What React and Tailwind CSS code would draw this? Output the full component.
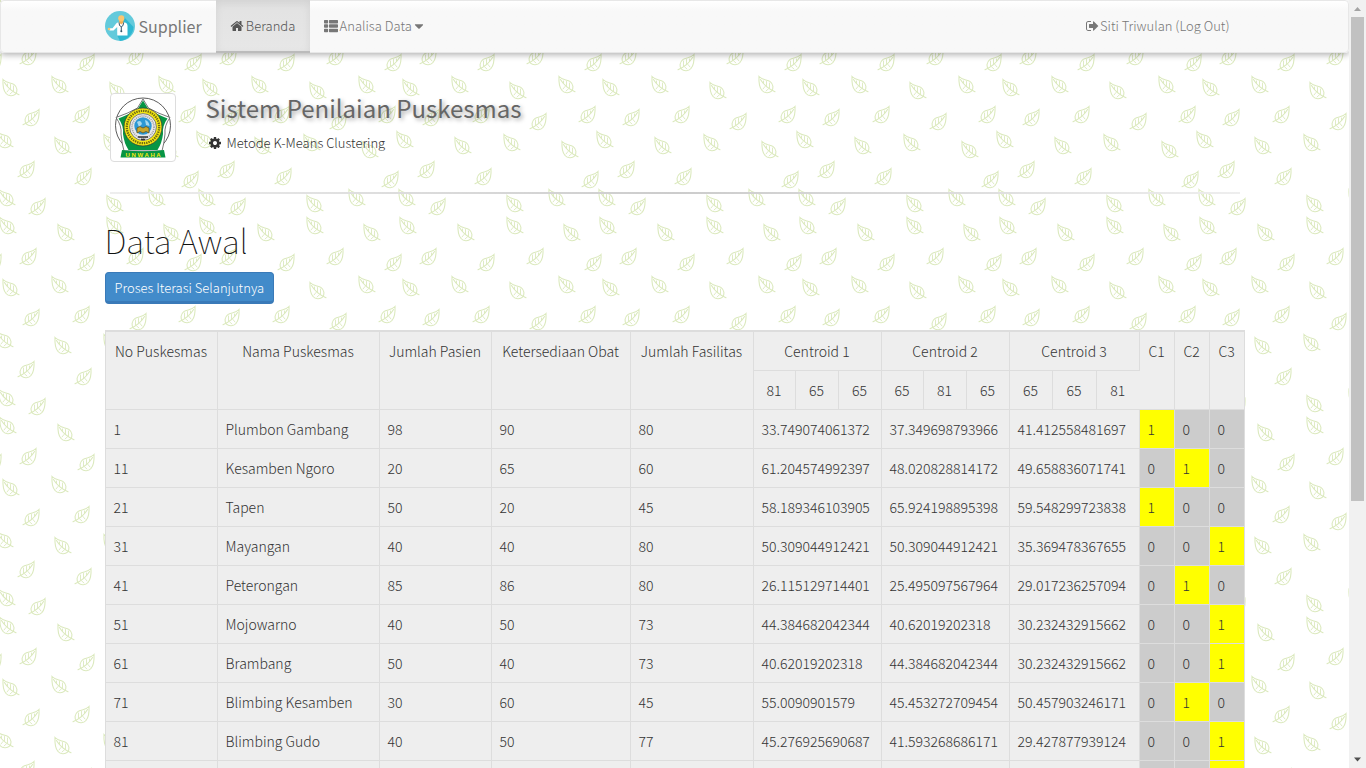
import React from "react";
import { FaCaretDown, FaThList } from "react-icons/fa";

const UP_LEAVES = [
  [193, 63], [28, 57], [86, 63], [135, 57], [187, 115], [31, 118], [81, 115],
  [138, 122], [190, 180], [26, 170], [83, 177], [37, 7],
];

const DOWN_LEAVES = [
  [167, 85], [11, 88], [60, 85], [118, 91], [5, 140], [170, 150], [63, 146],
  [112, 143], [157, 198], [7, 198], [115, 4], [172, 33], [8, 26], [66, 33],
  [115, 26],
];

// Leaves that cross a tile edge are repeated on the opposite side.
const wrap = (leaves) =>
  leaves.flatMap(([x, y]) =>
    [-200, 0, 200].flatMap((dx) =>
      [-200, 0, 200]
        .map((dy) => [x + dx, y + dy])
        .filter(([a, b]) => a > -12 && a < 212 && b > -12 && b < 212)
    )
  );

const ROWS = [
  ["1", "Plumbon Gambang", "98", "90", "80", "33.749074061372", "37.349698793966", "41.412558481697", 0],
  ["11", "Kesamben Ngoro", "20", "65", "60", "61.204574992397", "48.020828814172", "49.658836071741", 1],
  ["21", "Tapen", "50", "20", "45", "58.189346103905", "65.924198895398", "59.548299723838", 0],
  ["31", "Mayangan", "40", "40", "80", "50.309044912421", "50.309044912421", "35.369478367655", 2],
  ["41", "Peterongan", "85", "86", "80", "26.115129714401", "25.495097567964", "29.017236257094", 1],
  ["51", "Mojowarno", "40", "50", "73", "44.384682042344", "40.62019202318", "30.232432915662", 2],
  ["61", "Brambang", "50", "40", "73", "40.62019202318", "44.384682042344", "30.232432915662", 2],
  ["71", "Blimbing Kesamben", "30", "60", "45", "55.0090901579", "45.453272709454", "50.457903246171", 1],
  ["81", "Blimbing Gudo", "40", "50", "77", "45.276925690687", "41.593268686171", "29.427877939124", 2],
  ["", "", "", "", "", "", "", "", 2],
];

function LeafBackground() {
  return (
    <svg className="absolute inset-0 h-full w-full" aria-hidden="true">
      <defs>
        <g id="leaf" fill="none" stroke="#dbe9bd" strokeWidth="1.1" strokeLinecap="round">
          <path d="M-8 -8.5C-8.3 -3 -8 2 -5 5.5C-2.5 8.3 2 8.6 4.5 6.2C6.8 3.5 6.4 -1 3.2 -3.4C0 -5.4 -5 -5 -8 -8.5Z" />
          <path d="M-6.5 -5.5C-4 -1 1 3.5 8 6.8" />
          <path d="M-3.5 -4V-1.5M-0.5 -3.5V1M2.5 -2V3.2M-4 4L-2 1.5M-1 6L1.5 3.8" strokeWidth="0.9" />
        </g>
        <pattern id="leaves" width="200" height="200" patternUnits="userSpaceOnUse">
          {wrap(DOWN_LEAVES).map(([x, y]) => (
            <use key={`d${x}/${y}`} href="#leaf" transform={`translate(${x} ${y})`} />
          ))}
          {wrap(UP_LEAVES).map(([x, y]) => (
            <use key={`u${x}/${y}`} href="#leaf" transform={`translate(${x} ${y}) scale(-1 1)`} />
          ))}
        </pattern>
      </defs>
      <rect width="100%" height="100%" fill="url(#leaves)" />
    </svg>
  );
}

function DoctorLogo() {
  return (
    <svg className="size-[30px]" viewBox="0 0 30 30" aria-hidden="true">
      <circle cx="15" cy="15" r="15" fill="#63cadb" />
      <path d="M18 5L28.5 16A15 15 0 0 1 15 30L12 24Z" fill="#2eb8d2" />
      <path d="M13 11.5H20Q22.5 12 22.5 15V24.500H12.200V16L8.500 19.500H4.500V17.200H7.500L11 12.700Q12 11.500 13 11.500Z" fill="#fff" />
      <circle cx="4" cy="18" r="1.300" fill="#fbc66f" />
      <path d="M14.200 8H18.400V11.500L16.300 13.500L14.200 11.500Z" fill="#f0b055" />
      <circle cx="16.300" cy="7.300" r="3.100" fill="#fbc66f" />
      <path d="M14 11.500Q14 15.500 16.300 15.700Q18.600 15.500 18.600 11.500M16.300 15.700V20" fill="none" stroke="#35576b" strokeWidth="1" />
      <circle cx="16.300" cy="20.300" r="1" fill="#35576b" />
    </svg>
  );
}

function Emblem() {
  return (
    <svg className="h-[61px] w-[58px]" viewBox="0 0 58 61" role="img" aria-label="UNWAHA">
      <circle cx="29" cy="28.500" r="27.500" fill="#fff" stroke="#333" strokeWidth="0.800" />
      <path d="M29 2L34.500 11Q43 16 56 20.500Q50 29 51 37Q50 47 48 54H10Q8 47 7 37Q8 29 2 20.500Q15 16 23.500 11Z" fill="#fff" stroke="#555" strokeWidth="0.800" />
      <path d="M29 3.500L34 11.500Q42 17 53.500 21.500Q48 29 49 37Q48 46 43.500 53H14.500Q10 46 9 37Q10 29 4.500 21.500Q16 17 24 11.500Z" fill="#079544" />
      <circle cx="29" cy="30" r="19" fill="#f5e814" stroke="#333" strokeWidth="0.700" />
      <circle cx="29" cy="30" r="16.200" fill="none" stroke="#4d4a12" strokeWidth="2.300" strokeDasharray="1.400 0.900" opacity="0.800" />
      <circle cx="29" cy="30" r="13.400" fill="#e8e8ea" stroke="#555" strokeWidth="0.700" />
      <circle cx="29" cy="30" r="11" fill="none" stroke="#999" strokeWidth="1.500" strokeDasharray="1 1" />
      <circle cx="29" cy="29" r="8.700" fill="#2c98d4" />
      <path d="M23 25Q27 22 28 27L25 30ZM31 23Q35 24 35.500 29L32 28Z" fill="#a6d8ee" />
      <path d="M23 31L26 29.500L29 31L32 29.500L35 31V36L32 34.500L29 36L26 34.500L23 36Z" fill="#c9a62c" stroke="#574a1c" strokeWidth="0.700" />
      <path d="M24 40H34M27 42.500H31" stroke="#333" strokeWidth="1.300" />
      <path d="M8 53Q29 55.500 50 53L51.500 60.500H6.500Z" fill="#079544" />
      <text x="29" y="59.500" textAnchor="middle" fontFamily="Liberation Sans, sans-serif" fontWeight="700" fontSize="6" fill="#f5e814">U N W A H A</text>
    </svg>
  );
}

function GlyphIcon({ d, className }) {
  return (
    <svg className={className} viewBox="0 0 1792 1792" fill="currentColor" aria-hidden="true">
      <path d={d} />
    </svg>
  );
}

const HOME =
  "M1472 992v480q0 26-19 45t-45 19h-384v-384h-256v384h-384q-26 0-45-19t-19-45v-480q0-1 .5-3t.5-3l575-474 575 474q1 2 1 6zm223-69l-62 74q-8 9-21 11h-3q-13 0-21-7l-692-577-692 577q-12 8-24 7-13-2-21-11l-62-74q-8-10-7-23.500t11-21.500l719-599q32-26 76-26t76 26l244 204v-195q0-14 9-23t23-9h192q14 0 23 9t9 23v408l219 182q10 8 11 21.500t-7 23.500z";
const SIGN_OUT =
  "M640 1440q0 4 1 20t.5 26.500-3 23.500-10 19.500-20.500 6.500h-320q-119 0-203.500-84.500t-84.500-203.500v-704q0-119 84.500-203.500t203.500-84.500h320q13 0 22.500 9.500t9.500 22.500q0 4 1 20t.5 26.500-3 23.500-10 19.500-20.500 6.500h-320q-66 0-113 47t-47 113v704q0 66 47 113t113 47h312l11.500 1 11.500 3 8 5.500 7 9 2 13.500zm928-544q0 26-19 45l-544 544q-19 19-45 19t-45-19-19-45v-288h-448q-26 0-45-19t-19-45v-384q0-26 19-45t45-19h448v-288q0-26 19-45t45-19 45 19l544 544q19 19 19 45z";
const COG =
  "M1152 896q0-106-75-181t-181-75-181 75-75 181 75 181 181 75 181-75 75-181zm512-109v222q0 12-8 23t-20 13l-185 28q-19 54-39 91 35 50 107 138 10 12 10 25t-9 23q-27 37-99 108t-94 71q-12 0-26-9l-138-108q-44 23-91 38-16 136-29 186-7 28-36 28h-222q-14 0-24.500-8.500t-11.500-21.500l-28-184q-49-16-90-37l-141 107q-10 9-25 9-14 0-25-11-126-114-165-168-7-10-7-23 0-12 8-23 15-21 51-66.500t54-70.500q-27-50-41-99l-183-27q-13-2-21-12.500t-8-23.500v-222q0-12 8-23t19-13l186-28q14-46 39-92-40-57-107-138-10-12-10-24 0-10 9-23 26-36 98.500-107.500t94.500-71.500q13 0 26 10l138 107q44-23 91-38 16-136 29-186 7-28 36-28h222q14 0 24.500 8.500t11.500 21.500l28 184q49 16 90 37l142-107q9-9 24-9 13 0 25 10 129 119 165 170 7 8 7 22 0 12-8 23-15 21-51 66.500t-54 70.500q26 50 41 98l183 28q13 2 21 12.500t8 23.500z";

function Navbar() {
  return (
    <nav className="rounded border border-[#e7e7e7] bg-linear-to-b from-white to-[#f8f8f8] to-20% shadow-[0_2px_6px_rgba(0,0,0,0.3)]">
      <div className="mx-auto flex h-[51px] max-w-[1140px] items-stretch text-[13px] text-[#777]">
        <a href="#" className="flex items-center gap-1 pr-[14px] pb-[2px] text-[16px] font-normal">
          <DoctorLogo />
          Supplier
        </a>
        <a
          href="#beranda"
          className="-mt-px -mb-px flex w-[94px] items-center justify-center border-b-2 border-[#bbb] bg-linear-to-b from-[#e2e2e2] to-[#e7e7e7] text-[#555] shadow-[inset_0_3px_9px_rgba(0,0,0,0.075)]"
        >
          <GlyphIcon d={HOME} className="mr-[2px] size-[14px]" />
          Beranda
        </a>
        <button type="button" className="flex items-center px-[14px] pb-[2px]">
          <FaThList className="mr-[2px] size-[14px]" />
          Analisa Data
          <FaCaretDown className="size-[14px]" />
        </button>
        <a href="#logout" className="ml-auto flex items-center pr-[15px] pb-[2px]">
          <GlyphIcon d={SIGN_OUT} className="size-[14px]" />
          Siti Triwulan (Log Out)
        </a>
      </div>
    </nav>
  );
}

function Header() {
  return (
    <header className="px-[5px] pt-10">
      <div className="flex gap-[30px]">
        <div className="flex h-[69px] w-[66px] items-center justify-center rounded border border-[#ddd] bg-white">
          <Emblem />
        </div>
        <div>
          <h2 className="text-[24px] leading-[30px] font-normal text-[#666] [text-shadow:2px_2px_4px_rgba(0,0,0,0.35)]">
            Sistem Penilaian Puskesmas
          </h2>
          <p className="mt-[10px] flex items-center gap-[5px] pl-[2px] text-[13px] leading-[20px]">
            <GlyphIcon d={COG} className="size-[14px]" />
            Metode K-Means Clustering
          </p>
        </div>
      </div>
      <hr className="mt-[30px] h-[2px] border-0 bg-linear-to-r from-[#eee] via-[#ccc] to-[#eee]" />
    </header>
  );
}

function DataTable() {
  const head = "border border-[#ddd] p-2 text-center align-top font-light";
  return (
    <table className="w-full table-fixed border-collapse border border-t-2 border-[#ddd] bg-[#eee] text-[14px] leading-[22px]">
      <colgroup>
        <col className="w-[112px]" />
        <col className="w-[162px]" />
        <col className="w-[112px]" />
        <col className="w-[139px]" />
        <col className="w-[123px]" />
        <col className="w-[42px]" />
        <col className="w-[43px]" />
        <col className="w-[43px]" />
        <col className="w-[42px]" />
        <col className="w-[43px]" />
        <col className="w-[43px]" />
        <col className="w-[43px]" />
        <col className="w-[44px]" />
        <col className="w-[43px]" />
        <col className="w-[35px]" />
        <col className="w-[35px]" />
        <col className="w-[35px]" />
      </colgroup>
      <thead>
        <tr className="whitespace-nowrap">
          {["No Puskesmas", "Nama Puskesmas", "Jumlah Pasien", "Ketersediaan Obat", "Jumlah Fasilitas"].map((t) => (
            <th key={t} rowSpan={2} className={`${head} border-t-2`}>{t}</th>
          ))}
          {["Centroid 1", "Centroid 2", "Centroid 3"].map((t) => (
            <th key={t} colSpan={3} className={`${head} border-t-2`}>{t}</th>
          ))}
          <th rowSpan={2} className="border-t-2 border-r border-b border-[#ddd] p-2 text-center align-top font-light">C1</th>
          <th rowSpan={2} className={`${head} border-t-2`}>C2</th>
          <th rowSpan={2} className={`${head} border-t-2`}>C3</th>
        </tr>
        <tr>
          {["81", "65", "65", "65", "81", "65", "65", "65"].map((t, i) => (
            <th key={i} className={head}>{t}</th>
          ))}
          <th className="border-b border-l border-[#ddd] p-2 text-center align-top font-light">81</th>
        </tr>
      </thead>
      <tbody>
        {ROWS.map((row, r) => (
          <tr key={r} className="h-[39px]">
            {row.slice(0, 8).map((value, c) => (
              <td key={c} colSpan={c > 4 ? 3 : 1} className="border border-[#ddd] p-2 whitespace-nowrap">
                {value}
              </td>
            ))}
            {[0, 1, 2].map((c) => (
              <td key={c} className={`border border-[#ddd] p-2 ${row[8] === c ? "bg-[#ff0]" : "bg-[#ccc]"}`}>
                {row[0] && (row[8] === c ? "1" : "0")}
              </td>
            ))}
          </tr>
        ))}
      </tbody>
    </table>
  );
}

function ScrollRail() {
  return (
    <div className="flex w-[17px] shrink-0 flex-col items-center bg-[#f1f1f1]" aria-hidden="true">
      <svg className="size-[17px]" viewBox="0 0 17 17"><path d="M5 11L8.500 7L12 11Z" fill="#a3a3a3" /></svg>
      <div className="h-[63%] w-[13px] bg-[#c1c1c1]" />
      <svg className="mt-auto size-[17px]" viewBox="0 0 17 17"><path d="M5 6.500L8.500 10.500L12 6.500Z" fill="#505050" /></svg>
    </div>
  );
}

export default function App() {
  return (
    <div className="flex h-screen overflow-hidden bg-white font-['Noto_Sans_CJK_SC',sans-serif] font-light text-[#333]">
      <div className="relative h-full flex-1 overflow-hidden">
        <LeafBackground />
        <div className="relative">
          <Navbar />
          <main className="mx-auto max-w-[1140px]">
            <Header />
            <h1 className="mt-6 text-[33px] leading-[44px] font-thin text-[#111]">Data Awal</h1>
            <button
              type="button"
              className="mt-[10px] mb-[26px] block h-8 rounded border border-b-[3px] border-[#3a7ab8] bg-[#428bca] px-[9px] text-[13px] leading-[29px] text-white"
            >
              Proses Iterasi Selanjutnya
            </button>
            <DataTable />
          </main>
        </div>
      </div>
      <ScrollRail />
    </div>
  );
}
